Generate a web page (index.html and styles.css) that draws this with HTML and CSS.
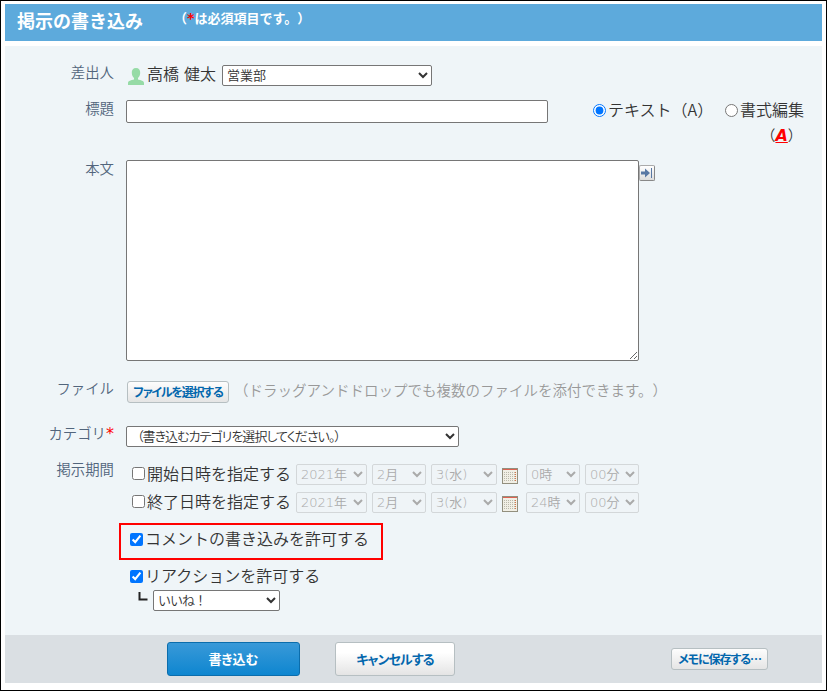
FILE: index.html
```html
<!DOCTYPE html>
<html lang="ja">
<head>
<meta charset="utf-8">
<title>掲示の書き込み</title>
<link rel="stylesheet" href="styles.css">
</head>
<body>
<div class="frame">
  <header class="header">
    <h1>掲示の書き込み</h1>
    <p>（<span class="star">*</span>は必須項目です。）</p>
  </header>
  <form class="form">
    <div class="row row-sender">
      <span class="label">差出人</span>
      <div class="field">
        <svg class="user" width="16" height="17" viewBox="0 0 16 17"><path d="M8 0C5 0 3.600 2 3.800 5c.1 2.300 1 4 2.200 5v1.500C3.500 12.400 0 12.600 0 15v2h16v-2c0-2.400-3.500-2.600-6-3.500V10c1.200-1 2.100-2.700 2.200-5C12.400 2 11 0 8 0z" fill="#96dba6"/></svg>
        <span class="name">高橋 健太</span>
        <select class="sel-dept"><option>営業部</option></select>
      </div>
    </div>
    <div class="row row-title">
      <label class="label">標題</label>
      <div class="field">
        <input class="title-input" type="text">
        <div class="modes">
          <label class="mode-text"><input type="radio" name="mode" checked><span class="caption">テキスト（A）</span></label>
          <div class="mode-rich">
            <label><input type="radio" name="mode"><span class="caption">書式編集</span></label>
            <span class="rich-mark">（<b>A</b>）</span>
          </div>
        </div>
      </div>
    </div>
    <div class="row row-body">
      <label class="label">本文</label>
      <div class="field">
        <textarea></textarea>
        <button type="button" class="expand"><svg width="12" height="12" viewBox="0 0 12 12"><path d="M0 4.500h4V1.500L9 6l-5 4.500V7.500H0z" fill="#5878a4"/><path d="M10.500 1v10" stroke="#5878a4"/></svg></button>
      </div>
    </div>
    <div class="row row-file">
      <span class="label">ファイル</span>
      <div class="field">
        <button type="button" class="btn btn-file">ファイルを選択する</button>
        <span class="hint">（ドラッグアンドドロップでも複数のファイルを添付できます。）</span>
      </div>
    </div>
    <div class="row row-category">
      <span class="label">カテゴリ<span class="star">*</span></span>
      <div class="field"><select class="sel-category"><option>（書き込むカテゴリを選択してください。）</option></select></div>
    </div>
    <div class="row row-period">
      <span class="label">掲示期間</span>
      <div class="field">
        <div class="period">
          <label><input type="checkbox">開始日時を指定する</label>
          <select class="year" disabled><option>2021年</option></select>
          <select disabled><option>2月</option></select>
          <select class="day" disabled><option>3(水)</option></select>
          <svg class="cal" width="16" height="16" viewBox="0 0 16 16"><path d="M0 0h16v16H0z" fill="#928f7e"/><path d="M1 2h14v13H1z" fill="#f1efe5"/><path d="M1 1.500h14" stroke="#dd6252"/><path d="M2 4.500h11M2 6.500h11M2 8.500h11M2 10.500h11M2 12.500h11" stroke="#bab8aa" stroke-dasharray="1 1"/><path d="M13.500 4v9" stroke="#dd7444" stroke-dasharray="1 1"/></svg>
          <select disabled><option>0時</option></select>
          <select disabled><option>00分</option></select>
        </div>
        <div class="period">
          <label><input type="checkbox">終了日時を指定する</label>
          <select class="year" disabled><option>2021年</option></select>
          <select disabled><option>2月</option></select>
          <select class="day" disabled><option>3(水)</option></select>
          <svg class="cal" width="16" height="16" viewBox="0 0 16 16"><path d="M0 0h16v16H0z" fill="#928f7e"/><path d="M1 2h14v13H1z" fill="#f1efe5"/><path d="M1 1.500h14" stroke="#dd6252"/><path d="M2 4.500h11M2 6.500h11M2 8.500h11M2 10.500h11M2 12.500h11" stroke="#bab8aa" stroke-dasharray="1 1"/><path d="M13.500 4v9" stroke="#dd7444" stroke-dasharray="1 1"/></svg>
          <select disabled><option>24時</option></select>
          <select disabled><option>00分</option></select>
        </div>
      </div>
    </div>
    <label class="allow-comment"><input type="checkbox" checked><span class="caption">コメントの書き込みを許可する</span></label>
    <div class="reaction">
      <label><input type="checkbox" checked><span class="caption">リアクションを許可する</span></label>
      <div class="reaction-kind">
        <svg width="10" height="10" viewBox="0 0 10 10"><path d="M1.500 0v7.500H9.500" fill="none" stroke="#222" stroke-width="2"/></svg>
        <select><option>いいね！</option></select>
      </div>
    </div>
  </form>
  <footer class="footer">
    <button class="btn btn-primary">書き込む</button>
    <button class="btn btn-cancel">キャンセルする</button>
    <button class="btn btn-memo">メモに保存する…</button>
  </footer>
</div>
</body>
</html>
```
FILE: styles.css
```css
* { box-sizing: border-box; }
body { margin: 0; background: #fff; color: #333; font: 350 16px/24px "Noto Sans CJK JP", sans-serif; text-spacing-trim: space-all; }
.frame { width: 827px; height: 691px; border: 1px solid #000; padding: 3px 4px 7px; }
.header { height: 37px; background: #5daadc; color: #fff; display: flex; padding-left: 12px; }
.header h1 { margin: 4px 0 0; width: 157px; font-size: 18px; line-height: 24px; font-weight: 700; }
.header p { margin: 4px 0 0; font-size: 13px; line-height: 20px; font-weight: 700; }
.star { color: #f00; font-family: "DejaVu Sans", sans-serif; font-size: 1.1em; line-height: 1; }
.label .star { font-weight: 400; font-size: 16px; }
.form { height: 589px; margin-top: 5px; background: #eff5f8; padding-top: 14px; }
.row { display: flex; gap: 12px; }
.label { width: 109px; text-align: right; font-size: 14.4px; color: #52657c; line-height: 22px; white-space: nowrap; }
.field { flex: 1; display: flex; align-items: flex-start; white-space: nowrap; }
input, select, textarea, button { margin: 0; font-family: "Noto Sans CJK JP", sans-serif; }
input[type=checkbox], input[type=radio] { width: 13px; height: 13px; flex: none; accent-color: #0075ff; }
label:has(input) { display: flex; align-items: center; gap: 2px; }
.caption { margin-top: -3px; }
select { height: 21px; border: 1px solid #767676; border-radius: 2px; background-color: #fff; color: #333; font-family: "DejaVu Sans", "Noto Sans CJK JP", sans-serif; font-size: 13px; font-weight: 350; padding: 0; text-spacing-trim: space-all; }
select:disabled { width: 54px; color: #aaa; border-color: #d3d7d9; background-color: #eff4f7; opacity: 1; }
.row-sender { height: 32px; padding-top: 1px; }
.user { margin: 7px 3px 0 2px; }
.name { width: 75px; word-spacing: 1.500px; }
.sel-dept { width: 210px; margin-top: 4px; }
.row-title { height: 60px; padding-top: 8px; }
.row-title .label { line-height: 16px; }
.title-input { width: 422px; height: 23px; border: 1px solid #767676; border-radius: 2px; background: #fff; }
.modes { display: flex; margin: -2px 0 0 45px; }
.mode-text, .mode-rich label { height: 25px; }
.mode-text { width: 132px; }
.mode-rich { width: 80px; }
.rich-mark { display: block; margin-left: 36px; font-size: 14.4px; line-height: 24px; }
.rich-mark b { color: #f00; font: italic 700 16px/20px "DejaVu Sans", sans-serif; text-decoration: underline; }
.row-body { height: 218px; padding-top: 8px; }
.row-body .label { line-height: 16px; }
textarea { width: 513px; height: 201px; border: 1px solid #767676; border-radius: 2px; background: #fff; resize: both; }
.expand { width: 16px; height: 16px; margin-top: 5px; padding: 0; border: 1px solid #aaa; border-right-color: #888; border-bottom-color: #888; border-radius: 2px; background: linear-gradient(#fff, #ddd); display: grid; place-items: center; }
.row-file { height: 45px; padding-top: 9px; }
.row-file .label { line-height: 18px; }
.btn { border: 1px solid #b6bfc2; border-radius: 3px; padding: 0; background: linear-gradient(#fdfdfd, #e5e5e5); color: #0367ad; font-weight: 700; font-size: 12px; line-height: 18px; font-feature-settings: "palt"; white-space: nowrap; }
.btn-file { width: 102px; height: 22px; margin: 2px 0 0 1px; letter-spacing: -1.200px; }
.hint { margin-left: 5px; font-size: 14.500px; color: #999; line-height: 22px; }
.row-category { height: 43px; padding-top: 8px; }
.row-category .label { line-height: 20px; }
.row-category .field { padding-top: 3px; }
.sel-category { width: 333px; padding-left: 6px; font-feature-settings: "palt"; letter-spacing: -0.950px; }
.row-period { height: 65px; }
.row-period .label { line-height: 22px; }
.row-period .field { display: block; padding: 2px 0 0 6px; }
.period { height: 28px; display: flex; align-items: center; gap: 5px; }
.period label { width: 159px; margin-top: -2px; }
.period .year { width: 71px; }
.period .day { width: 66px; }
.period .cal { margin: 3px 3px 0 0; }
.allow-comment { width: 264px; height: 37px; margin-left: 114px; padding: 0 0 4px 9px; border: 2px solid #f00; white-space: nowrap; }
.reaction { margin-left: 125px; padding-top: 5px; }
.reaction > label { height: 22px; }
.reaction-kind { display: flex; margin-left: 8px; padding-top: 3px; }
.reaction-kind svg { margin: 2px 5px 0 0; }
.reaction-kind select { width: 127px; letter-spacing: -1px; }
.footer { height: 48px; background: #dadfe3; display: flex; padding: 7px 54px 0 162px; }
.btn-primary { width: 133px; height: 34px; background: linear-gradient(#3999d8, #0e86d0); border-color: #0b6dac; color: #fff; font-size: 13px; }
.btn-cancel { width: 120px; height: 34px; margin-left: 35px; background: linear-gradient(#fff 30%, #e4e4e4); font-size: 13px; letter-spacing: -0.900px; }
.btn-memo { width: 97px; height: 22px; margin: 6px 0 0 auto; letter-spacing: -1.100px; }
```
